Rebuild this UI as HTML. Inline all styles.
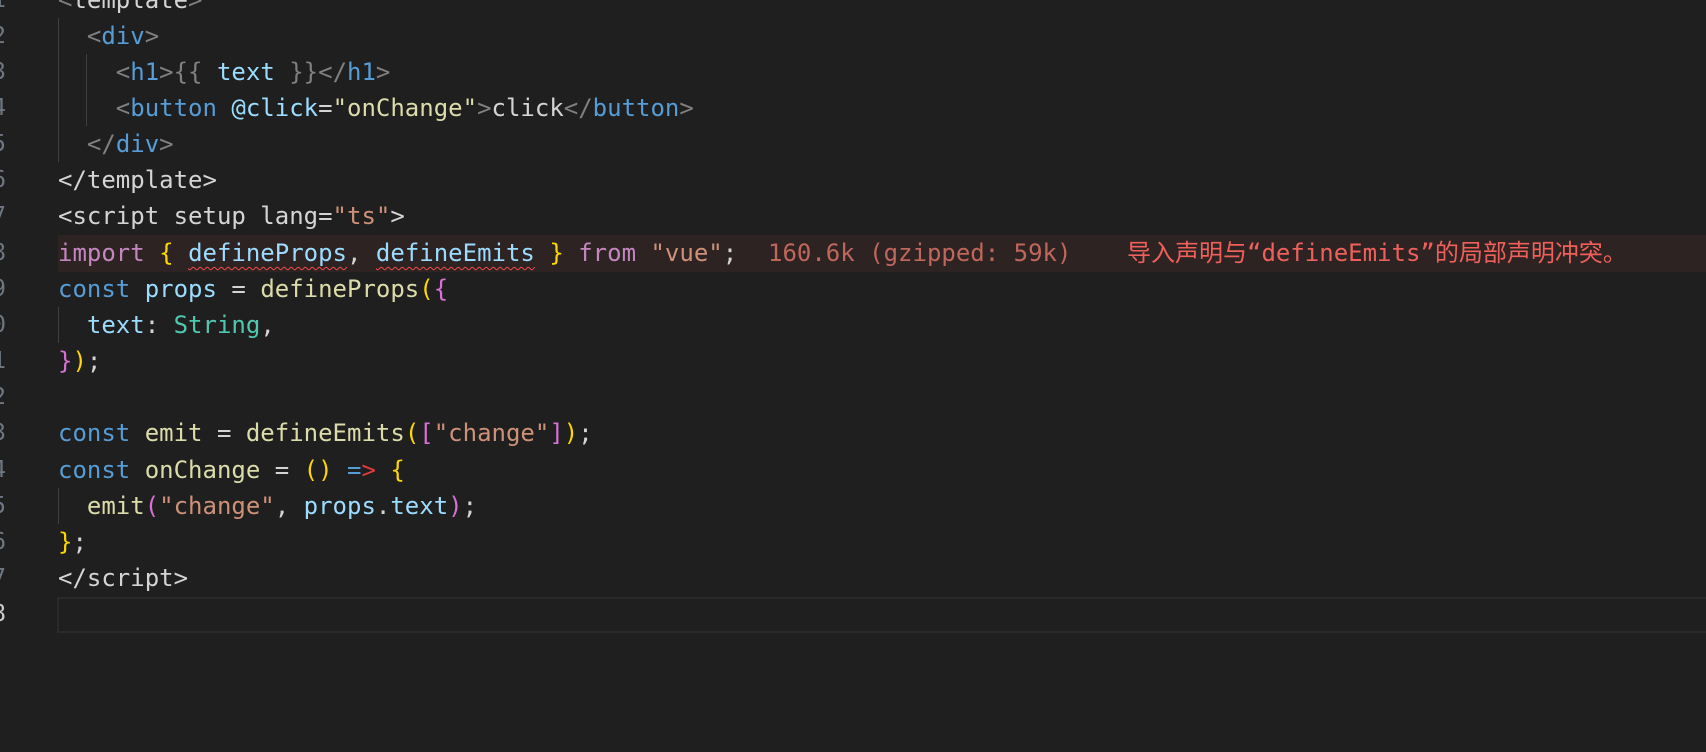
<!DOCTYPE html>
<html><head><meta charset="utf-8"><style>
body{margin:0;width:1706px;height:752px;background:#1f1f1f;overflow:hidden;position:relative;font-family:"DejaVu Sans Mono","Liberation Mono",monospace;font-size:24px;color:#d4d4d4}
.l{position:absolute;left:58px;height:36px;line-height:36px;white-space:pre}
.n{position:absolute;left:-8px;width:14px;text-align:right;height:36px;line-height:36px;color:#6e7681;font-size:23px}
.g{position:absolute;width:1px;background:#404040}
.p{color:#808080}.t{color:#569cd6}.a{color:#9cdcfe}.s{color:#ce9178}.k{color:#c586c0}.f{color:#dcdcaa}.y{color:#ffd700}.m{color:#da70d6}.b{color:#179fff}.v{color:#9cdcfe}.c{color:#4ec9b0}
.sq{text-decoration:underline wavy #f14c4c;text-underline-offset:5px;text-decoration-thickness:1px}
.e{position:absolute;height:36px;line-height:36px;white-space:pre;color:#d46b5e;font-family:"DejaVu Sans Mono","Noto Sans CJK SC",monospace}
</style></head><body>
<div style="position:absolute;left:58px;top:235px;width:1648px;height:37px;background:#2d2323"></div>
<div style="position:absolute;left:57px;top:597px;width:1660px;height:32px;border:2px solid #2a2a2a"></div>
<div class="g" style="left:58px;top:18px;height:144px"></div>
<div class="g" style="left:86px;top:54px;height:72px"></div>
<div class="g" style="left:58px;top:307px;height:36px"></div>
<div class="g" style="left:58px;top:488px;height:36px"></div>
<div class="n" style="top:-18px">1</div><div class="n" style="top:18px">2</div><div class="n" style="top:54px">3</div><div class="n" style="top:90px">4</div><div class="n" style="top:126px">5</div><div class="n" style="top:162px">6</div><div class="n" style="top:198px">7</div><div class="n" style="top:235px">8</div><div class="n" style="top:271px">9</div><div class="n" style="top:307px">0</div><div class="n" style="top:343px">1</div><div class="n" style="top:379px">2</div><div class="n" style="top:415px">3</div><div class="n" style="top:452px">4</div><div class="n" style="top:488px">5</div><div class="n" style="top:524px">6</div><div class="n" style="top:560px">7</div><div class="n" style="top:596px;color:#ccc">8</div>
<div class="l" style="top:-18px"><span class="p">&lt;</span>template<span class="p">&gt;</span></div>
<div class="l" style="top:18px">  <span class="p">&lt;</span><span class="t">div</span><span class="p">&gt;</span></div>
<div class="l" style="top:54px">    <span class="p">&lt;</span><span class="t">h1</span><span class="p">&gt;{{</span> <span class="a">text</span> <span class="p">}}&lt;/</span><span class="t">h1</span><span class="p">&gt;</span></div>
<div class="l" style="top:90px">    <span class="p">&lt;</span><span class="t">button</span> <span class="a">@click</span>=<span class="f">"onChange"</span><span class="p">&gt;</span>click<span class="p">&lt;/</span><span class="t">button</span><span class="p">&gt;</span></div>
<div class="l" style="top:126px">  <span class="p">&lt;/</span><span class="t">div</span><span class="p">&gt;</span></div>
<div class="l" style="top:162px">&lt;/template&gt;</div>
<div class="l" style="top:198px">&lt;script setup lang=<span class="s">"ts"</span>&gt;</div>
<div class="l" style="top:235px"><span class="k">import</span> <span class="y">{</span> <span class="v sq">defineProps</span>, <span class="v sq">defineEmits</span> <span class="y">}</span> <span class="k">from</span> <span class="s">"vue"</span>;</div>
<div class="e" style="left:768px;top:235px;color:#c0665a">160.6k (gzipped: 59k)</div>
<div class="e" style="left:1127px;top:235px;color:#f0605a">导入声明与“defineEmits”的局部声明冲突。</div>
<div class="l" style="top:271px"><span class="t">const</span> <span class="v">props</span> = <span class="f">defineProps</span><span class="y">(</span><span class="m">{</span></div>
<div class="l" style="top:307px">  <span class="v">text</span>: <span class="c">String</span>,</div>
<div class="l" style="top:343px"><span class="m">}</span><span class="y">)</span>;</div>
<div class="l" style="top:415px"><span class="t">const</span> <span class="f">emit</span> = <span class="f">defineEmits</span><span class="y">(</span><span class="m">[</span><span class="s">"change"</span><span class="m">]</span><span class="y">)</span>;</div>
<div class="l" style="top:452px"><span class="t">const</span> <span class="f">onChange</span> = <span class="y">()</span> <span class="t">=</span><span style="color:#e03c3c">&gt;</span> <span class="y">{</span></div>
<div class="l" style="top:488px">  <span class="f">emit</span><span class="m">(</span><span class="s">"change"</span>, <span class="v">props</span>.<span class="v">text</span><span class="m">)</span>;</div>
<div class="l" style="top:524px"><span class="y">}</span>;</div>
<div class="l" style="top:560px">&lt;/script&gt;</div>
</body></html>
